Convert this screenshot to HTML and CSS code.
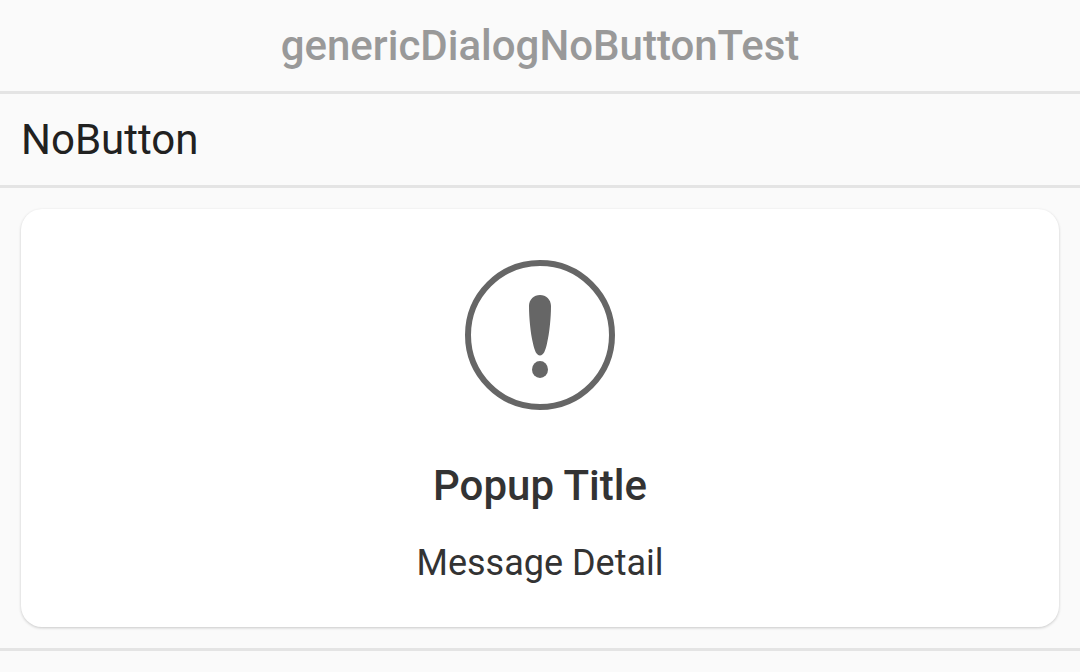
FILE: index.html
```html
<!DOCTYPE html>
<html lang="en">
<head>
<meta charset="utf-8">
<meta name="viewport" content="width=device-width, initial-scale=1">
<title>genericDialogNoButtonTest</title>
<link rel="stylesheet" href="styles.css">
</head>
<body>
<h1 class="test-name">genericDialogNoButtonTest</h1>
<main>
<h2 class="case-name">NoButton</h2>
<div class="case-body">
<section class="dialog">
<svg class="dialog-icon" viewBox="0 0 150 150" aria-hidden="true">
<circle cx="75" cy="75" r="72" fill="none" stroke="currentColor" stroke-width="6"/>
<path d="M64 46C64 39.500 69 35 75 35S86 39.500 86 46C86 58 84.500 73 82 83.500C80.500 90.500 78.500 95.500 75 95.500S69.500 90.500 68 83.500C65.500 73 64 58 64 46Z" fill="currentColor"/>
<ellipse cx="75" cy="109.500" rx="8" ry="8.500" fill="currentColor"/>
</svg>
<h3 class="dialog-title">Popup Title</h3>
<p class="dialog-message">Message Detail</p>
</section>
</div>
</main>
</body>
</html>
```
FILE: styles.css
```css
body {
  margin: 0;
  background: #fafafa;
  font-family: Roboto, sans-serif;
}

.test-name,
.case-name {
  margin: 0;
  padding: 21px;
  border-bottom: 3px solid #e4e4e4;
  font-size: 42px;
  line-height: 49px;
}

.test-name {
  color: #999;
  font-weight: 500;
  text-align: center;
}

.case-name {
  color: #212121;
  font-weight: 400;
}

.case-body {
  padding: 21px;
  border-bottom: 3px solid #e4e4e4;
}

.dialog {
  display: flex;
  flex-direction: column;
  align-items: center;
  padding: 51px 42px 42px;
  border-radius: 21px;
  background: #fff;
  box-shadow: 0 1px 3px rgba(0, 0, 0, 0.2);
  color: #333;
  text-align: center;
}

.dialog-icon {
  width: 150px;
  height: 150px;
  color: #666;
}

.dialog-title {
  margin: 51px 0 0;
  font-size: 42px;
  font-weight: 500;
  line-height: 49px;
}

.dialog-message {
  margin: 32px 0 0;
  font-size: 36px;
  line-height: 43px;
}
```
